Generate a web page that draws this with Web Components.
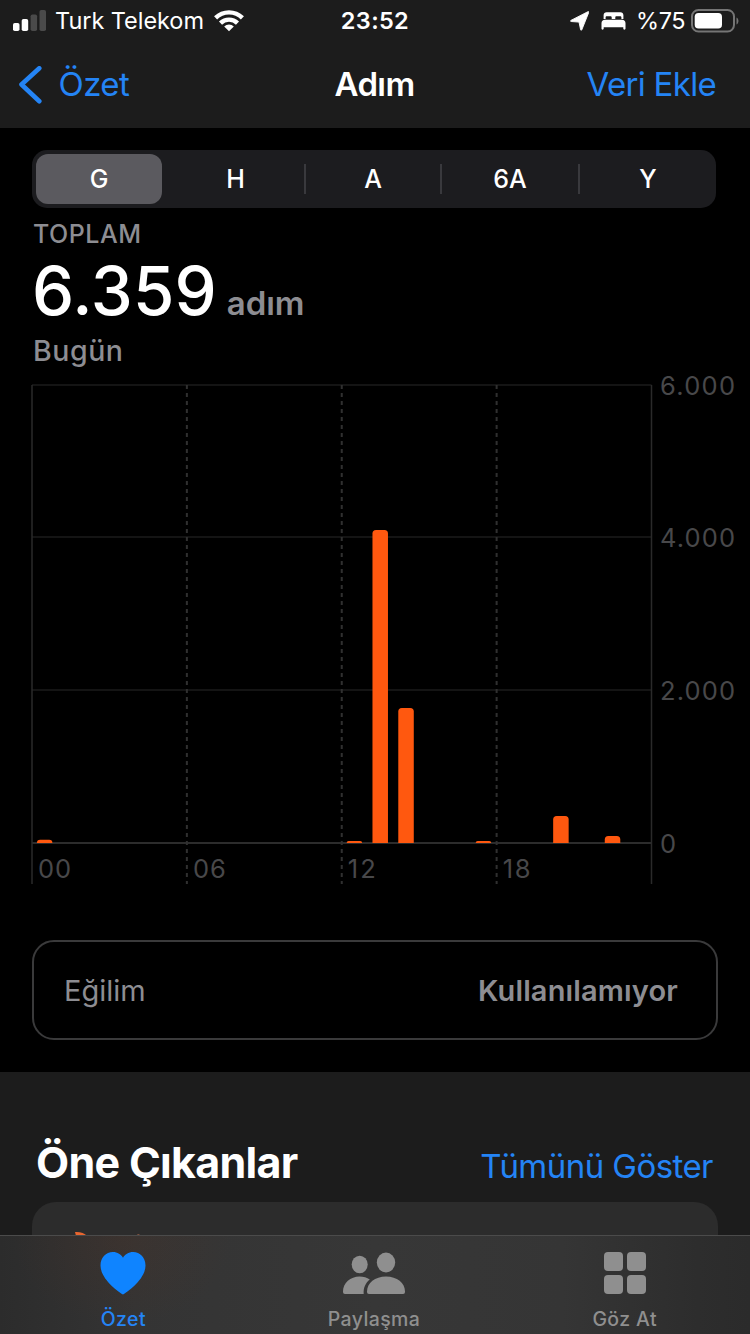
<!DOCTYPE html>
<html lang="tr">
<head>
<meta charset="utf-8">
<title>Adım</title>
<style>
  html { --blue: #2484f5; --bar: #1c1c1c; --gray: #8d8d92; --orange: #ff580f; --axis: #48484a; }
  body { margin: 0; width: 750px; height: 1334px; overflow: hidden; background: #000; color: #fff; font-family: Inter, 'Liberation Sans', sans-serif; }
</style>
</head>
<body>
<health-app></health-app>

<script>
const define = (name, html, setup) => {
  const template = document.createElement('template');
  template.innerHTML = html;
  customElements.define(name, class extends HTMLElement {
    connectedCallback() {
      if (this.shadowRoot) return;
      const root = this.attachShadow({ mode: 'open' });
      root.appendChild(template.content.cloneNode(true));
      if (setup) setup(this, root);
    }
  });
};

define('status-bar', `
<style>
  :host { display: grid; grid-template-columns: 1fr auto 1fr; align-items: center; box-sizing: border-box; height: 41px; padding: 0 11px 0 13px; background: var(--bar); font-size: 23.5px; line-height: 41px; }
  .side { display: flex; align-items: center; }
  .right { justify-content: flex-end; }
  svg { display: block; flex: none; }
  .carrier { margin: 0 10px 0 9px; letter-spacing: -0.05px; }
  .time { margin-right: 2px; font-weight: 600; letter-spacing: 0.35px; }
  .percent { margin: 0 6px 0 10px; letter-spacing: -0.5px; }
</style>
<div class="side">
  <svg width="33" height="22" viewBox="0 0 33 22">
    <rect x="0" y="13" width="6.5" height="8" rx="1.8" fill="#fff"/>
    <rect x="8.7" y="9" width="6.5" height="12" rx="1.8" fill="#fff"/>
    <rect x="17.6" y="4.5" width="6.5" height="16.5" rx="1.8" fill="#4a4a4a"/>
    <rect x="26.5" y="0" width="6.5" height="21" rx="1.8" fill="#4a4a4a"/>
  </svg>
  <span class="carrier">Turk Telekom</span>
  <svg width="30" height="22" viewBox="0 0 30 22" fill="none" stroke="#fff" stroke-width="4.4">
    <path d="M1.6 7.8a19.2 19.2 0 0 1 26.8 0"/>
    <path d="M6.5 13.1a12.2 12.2 0 0 1 17 0"/>
    <path d="M15 21.2l-4.8-4.7a6.8 6.8 0 0 1 9.6 0z" fill="#fff" stroke="none"/>
  </svg>
</div>
<span class="time">23:52</span>
<div class="side right">
  <svg width="19" height="20" viewBox="0 0 19 20"><path d="M17.9.7L.9 9.4c-.6.4-.4 1.1.3 1.1l7.8.6 1.6 7.6c.2.7.9.7 1.2.1L18.7 1.6c.3-.8-.1-1.200-.8-.9z" fill="#fff" stroke="#fff" stroke-width=".9"/></svg>
  <svg width="25" height="18" viewBox="0 0 25 18" fill="#fff" style="margin-left:12px">
    <path d="M2.6 7V3.200C2.600 1.400 3.800.3 5.600.3h13.800c1.800 0 3 1.100 3 2.900V7h-2V5.400c0-.8-.5-1.200-1.200-1.200h-3.700c-.8 0-1.200.5-1.200 1.200V7h-3.600V5.400c0-.8-.5-1.200-1.200-1.200H5.800c-.8 0-1.200.5-1.200 1.200V7z"/>
    <path d="M4 7.700h17c2.200 0 3.500 1.300 3.500 3.500v5.400c0 .7-.4 1.100-1.100 1.100s-1.100-.4-1.100-1.100V15.200H2.700v1.400c0 .7-.4 1.100-1.100 1.100S.5 17.300.5 16.600v-5.400C.5 9 1.800 7.700 4 7.700z"/>
  </svg>
  <span class="percent">%75</span>
  <svg width="48" height="24" viewBox="0 0 48 24">
    <rect x="1" y="1" width="42" height="21.5" rx="6.5" fill="none" stroke="#757575" stroke-width="2"/>
    <rect x="3.7" y="4" width="27.3" height="15.5" rx="3.8" fill="#fff"/>
    <path d="M45.5 8.500c2.600 1.100 2.600 5.900 0 7z" fill="#757575"/>
  </svg>
</div>`);

define('nav-bar', `
<style>
  :host { display: grid; grid-template-columns: 1fr auto 1fr; align-items: center; box-sizing: border-box; height: 87px; padding: 0 34px 0 19px; background: var(--bar); font-size: 33px; line-height: 87px; }
  .back { display: flex; align-items: center; gap: 16.5px; color: var(--blue); letter-spacing: -0.55px; }
  .title { margin-left: 14px; font-weight: 600; letter-spacing: -0.6px; }
  .action { text-align: right; color: var(--blue); letter-spacing: -0.7px; }
</style>
<div class="back">
  <svg width="23" height="38" viewBox="0 0 23 38"><path d="M20.3 2.3L2.5 18.5l17.8 16.7" fill="none" stroke="#2484f5" stroke-width="4.6" stroke-linecap="round" stroke-linejoin="round"/></svg>
  <span><slot name="back"></slot></span>
</div>
<span class="title"><slot></slot></span>
<span class="action"><slot name="action"></slot></span>`);

define('range-picker', `
<style>
  :host { display: grid; grid-template-columns: 135px 137px 136px 138px 1fr; align-items: center; height: 58px; margin: 22px 34px 0 32px; border-radius: 15px; background: #1c1c1f; font-size: 25px; font-weight: 460; text-align: center; }
  span { line-height: 30px; }
  .on { width: 126px; margin-left: 4px; line-height: 50px; border-radius: 12px; background: #5b5a5f; font-weight: 500; }
  .split { border-left: 2px solid #39393d; }
</style>`, (host, root) => {
  host.getAttribute('ranges').split(' ').forEach((label, i) => {
    const item = document.createElement('span');
    item.textContent = label;
    if (i === 0) item.className = 'on';
    if (i > 1) item.className = 'split';
    root.appendChild(item);
  });
});

define('step-summary', `
<style>
  :host { display: block; height: 168px; padding-left: 33px; color: var(--gray); font-weight: 500; }
  .label { padding-top: 11px; font-size: 25px; line-height: 30px; letter-spacing: 0.5px; }
  .value { display: flex; align-items: baseline; height: 84px; line-height: 84px; }
  .number { margin-left: -1px; color: #fff; font-size: 67px; letter-spacing: 0.1px; }
  .unit { margin-left: 10px; font-size: 33px; font-weight: 600; letter-spacing: -0.1px; }
  .date { font-size: 28.5px; line-height: 36px; letter-spacing: 0.55px; }
</style>
<div class="label"><slot name="label"></slot></div>
<div class="value"><span class="number"><slot></slot></span><span class="unit"><slot name="unit"></slot></span></div>
<div class="date"><slot name="date"></slot></div>`);

define('step-chart', `
<style>
  :host { display: block; height: 510px; }
  svg { display: block; overflow: visible; }
  text { fill: var(--axis); font-size: 25.5px; font-weight: 440; }
</style>
<svg width="750" height="510" viewBox="0 0 750 510"></svg>`, (host, root) => {
  const left = 32, right = 651.5, top = 9, base = 467, max = 6000;
  const hour = (right - left) / 24;
  const y = (value) => base - (value / max) * (base - top);
  const parts = [];

  [6000, 4000, 2000, 0].forEach((value) => {
    const line = Math.floor(y(value));
    parts.push(`<path d="M${left} ${line}H${right}" stroke="${value ? '#1b1b1b' : '#2c2c2c'}" stroke-width="${value ? 1.5 : 2}"/>`);
    const label = value.toLocaleString('de-DE');
    parts.push(`<text x="660" y="${line + 10}" textLength="${value ? 75 : 16}">${label}</text>`);
  });

  parts.push(`<path d="M32 ${top}V508M651.5 ${top}V508" stroke="#2a2a2a" stroke-width="1.5"/>`);
  [0, 6, 12, 18].forEach((h) => {
    const x = left + h * hour;
    if (h) parts.push(`<path d="M${x} ${top}V508" stroke="#303030" stroke-width="2" stroke-dasharray="4 4"/>`);
    parts.push(`<text x="${x + 6}" y="502" textLength="${h < 12 ? 33 : 28}">${String(h).padStart(2, '0')}</text>`);
  });

  // [hour, steps]
  [[0, 42], [12, 26], [13, 4100], [14, 1770], [17, 26], [20, 354], [22, 92]].forEach(([h, steps]) => {
    const x = left + (h + 0.5) * hour - 8;
    const height = base - y(steps);
    const r = Math.min(3.5, height);
    parts.push(`<path d="M${x} ${base}v${r - height}q0 ${-r} ${r} ${-r}h${15.5 - 2 * r}q${r} 0 ${r} ${r}V${base}z" style="fill:var(--orange)"/>`);
  });
  root.querySelector('svg').innerHTML = parts.join('');
});

define('trend-card', `
<style>
  :host { display: flex; justify-content: space-between; box-sizing: border-box; height: 100px; margin: 54px 32px 32px; padding: 0 38px 0 30px; border: 2px solid #3a3a3b; border-radius: 22px; color: var(--gray); font-size: 29px; line-height: 97px; }
  .name { letter-spacing: 0; }
  .state { font-weight: 600; letter-spacing: 0.15px; }
</style>
<span class="name"><slot name="name"></slot></span>
<span class="state"><slot></slot></span>`);

define('highlights-section', `
<style>
  :host { display: block; height: 262px; background: var(--bar); overflow: hidden; }
  .head { display: flex; justify-content: space-between; align-items: baseline; height: 130px; padding: 0 37px 0 36px; box-sizing: border-box; }
  .title { font-size: 43px; font-weight: 700; line-height: 180px; letter-spacing: -0.7px; }
  .more { color: var(--blue); font-size: 33px; letter-spacing: -0.55px; }
  .card { height: 150px; margin: 0 32px; border-radius: 24px; background: #2c2c2c; }
  .card svg { display: block; }
</style>
<div class="head">
  <span class="title"><slot></slot></span>
  <span class="more"><slot name="more"></slot></span>
</div>
<div class="card">
  <svg width="140" height="50" viewBox="0 0 140 50"><path d="M43 30q8-.5 12 4H44z" fill="#e9662f"/><path d="M104 33.5q2.500-2 4.500 0z" fill="#d87a52"/></svg>
</div>`);

define('tab-item', `
<style>
  :host { display: flex; flex: 1; flex-direction: column; align-items: center; color: #8f8f8f; font-size: 19.5px; font-weight: 500; letter-spacing: 0.4px; }
  :host([active]) { color: #2484f5; }
  .icon { height: 61px; padding-top: 9px; box-sizing: border-box; }
  .label { line-height: 48px; }
</style>
<div class="icon"><slot name="icon"></slot></div>
<div class="label"><slot></slot></div>`);

define('tab-bar', `
<style>
  :host { display: flex; box-sizing: border-box; height: 99px; border-top: 1px solid #4b4b4b; background: radial-gradient(ellipse 110px 90px at 122px 0, rgba(90, 48, 30, .2), transparent), linear-gradient(90deg, #2c2c2c, #343434 18%, #373737 50%, #353535 75%, #2d2d2d 93%, #2b2b2b); }
  ::slotted([active]) { margin-left: -2px; }
</style>
<slot></slot>`);

define('health-app', `
<style>
  :host { display: flex; flex-direction: column; position: relative; width: 750px; height: 1334px; overflow: hidden; }
  :host > * { flex: none; }
  tab-bar { position: absolute; left: 0; right: 0; bottom: 0; }
  svg { display: block; }
</style>
<status-bar></status-bar>
<nav-bar><span slot="back">Özet</span>Adım<span slot="action">Veri Ekle</span></nav-bar>
<range-picker ranges="G H A 6A Y"></range-picker>
<step-summary>
  <span slot="label">TOPLAM</span>6.359<span slot="unit">adım</span><span slot="date">Bugün</span>
</step-summary>
<step-chart></step-chart>
<trend-card><span slot="name">Eğilim</span>Kullanılamıyor</trend-card>
<highlights-section>Öne Çıkanlar<span slot="more">Tümünü Göster</span></highlights-section>
<tab-bar>
  <tab-item active>
    <svg slot="icon" width="46" height="50" viewBox="0 0 46 50"><path d="M23 49.500C18 46.500.5 34 .5 20.500.5 12.500 6 7 12.800 7 17.500 7 21.200 9.500 23 12.800 24.800 9.500 28.500 7 33.200 7 40 7 45.500 12.500 45.500 20.500 45.500 34 28 46.500 23 49.500z" fill="#0f84ff"/></svg>Özet
  </tab-item>
  <tab-item>
    <svg slot="icon" width="64" height="50" viewBox="0 0 64 50" fill="#8f8f8f">
      <ellipse cx="17.7" cy="19.5" rx="8" ry="8.8"/>
      <ellipse cx="44" cy="17.5" rx="9.2" ry="10"/>
      <path d="M1 46.500C1 38 8.500 31.500 17.500 31.500c4 0 7.500 1 10.300 2.900-4.200 3.500-6.600 8.200-6.100 14.600H3c-1.300 0-2-.8-2-2.500z"/>
      <path d="M25 46.500C25 38 33 31.500 44 31.500S63 38 63 46.500c0 1.700-.7 2.500-2 2.500H27c-1.300 0-2-.8-2-2.500z"/>
    </svg>Paylaşma
  </tab-item>
  <tab-item>
    <svg slot="icon" width="42" height="50" viewBox="0 0 42 50" fill="#8f8f8f">
      <rect y="7" width="19" height="19" rx="4"/><rect x="23" y="7" width="19" height="19" rx="4"/>
      <rect y="30" width="19" height="19" rx="4"/><rect x="23" y="30" width="19" height="19" rx="4"/>
    </svg>Göz At
  </tab-item>
</tab-bar>`);
</script>
</body>
</html>
